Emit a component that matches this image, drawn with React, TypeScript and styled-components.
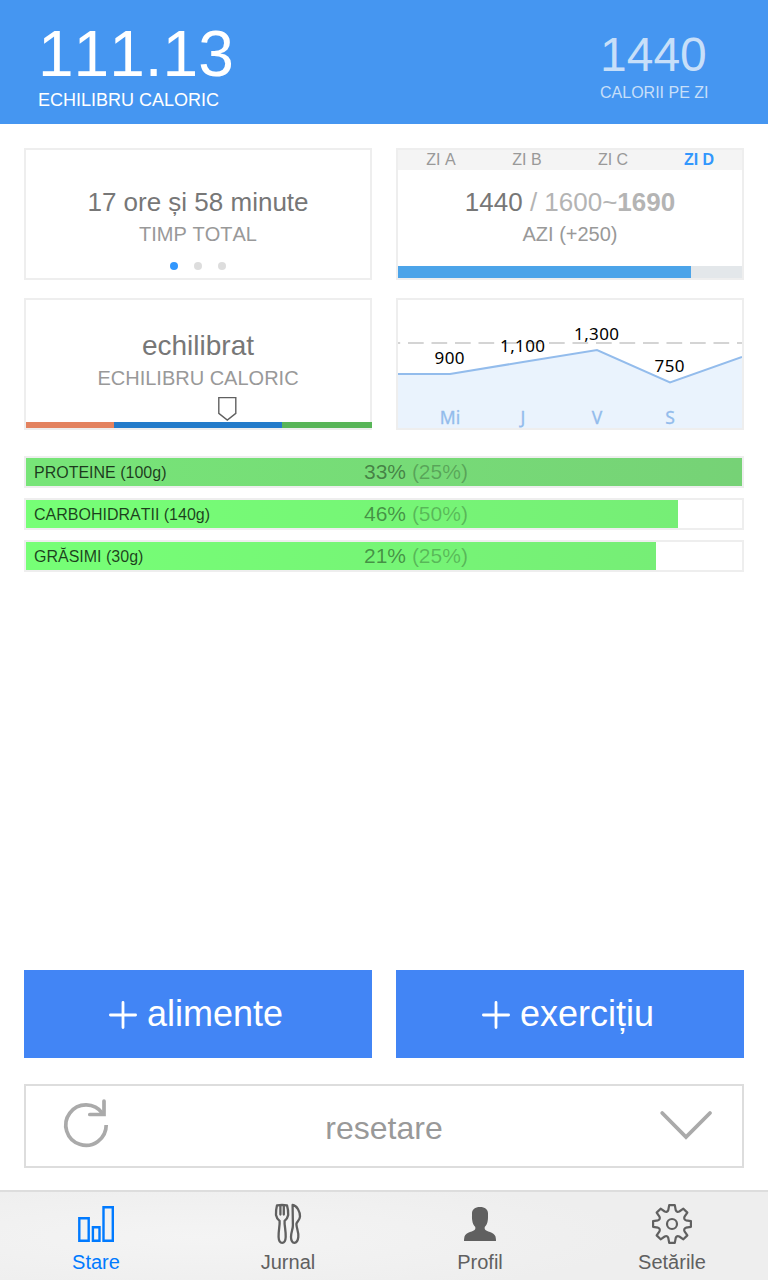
import React from "react";
import styled, { createGlobalStyle } from "styled-components";

const GlobalStyle = createGlobalStyle`
  * { box-sizing: border-box; }
  body {
    margin: 0;
    background: #fff;
    font-family: "Liberation Sans", Arial, sans-serif;
    font-kerning: none;
  }
`;

const Screen = styled.div`
  display: flex;
  flex-direction: column;
  width: 768px;
  height: 1280px;
  overflow: hidden;
  background: #fff;
`;

const Header = styled.header`
  display: flex;
  justify-content: space-between;
  flex: none;
  height: 124px;
  padding: 22px 59.5px 0 38px;
  background: #4596f1;
  color: #fff;
`;

const Stat = styled.div<{ $minor?: boolean }>`
  padding-top: ${(p) => (p.$minor ? 9 : 0)}px;
  color: ${(p) => (p.$minor ? "#c7dff9" : "#fff")};
  white-space: nowrap;
`;

const StatValue = styled.div<{ $size: number }>`
  font-size: ${(p) => p.$size}px;
  line-height: ${(p) => p.$size}px;
`;

const StatLabel = styled.div<{ $size: number }>`
  margin-top: 4px;
  font-size: ${(p) => p.$size}px;
  line-height: 20px;
`;

const Content = styled.main`
  display: flex;
  flex: 1;
  flex-direction: column;
  padding: 24px 24px 22px;
`;

const CardGrid = styled.section`
  display: grid;
  grid-template-columns: 348px 348px;
  gap: 18px 24px;
`;

const Card = styled.div`
  display: flex;
  flex-direction: column;
  align-items: center;
  height: 132px;
  border: 2px solid #eee;
  background: #fff;
`;

const CardValue = styled.div<{ $size?: number; $top: number }>`
  margin-top: ${(p) => p.$top}px;
  color: #777;
  font-size: ${(p) => p.$size ?? 26}px;
  line-height: 30px;
`;

const Muted = styled.span`
  color: #b4b4b4;
`;

const CardLabel = styled.div`
  margin-top: 5px;
  color: #999;
  font-size: 20px;
  line-height: 24px;
`;

const Dots = styled.div`
  display: flex;
  gap: 16px;
  margin-top: 16px;
`;

const Dot = styled.i<{ $on?: boolean }>`
  width: 8px;
  height: 8px;
  border-radius: 50%;
  background: ${(p) => (p.$on ? "#3297fd" : "#ddd")};
`;

const DayTabs = styled.div`
  display: grid;
  grid-template-columns: repeat(4, 1fr);
  width: 100%;
  height: 20px;
  background: #f4f4f4;
`;

const DayTab = styled.span<{ $on?: boolean }>`
  color: ${(p) => (p.$on ? "#3297fd" : "#999")};
  font-size: 16px;
  font-weight: ${(p) => (p.$on ? 700 : 400)};
  line-height: 19px;
  text-align: center;
`;

const Progress = styled.div`
  width: 100%;
  height: 12px;
  margin-top: auto;
  background: #e3e7ea;
`;

const ProgressFill = styled.div`
  height: 100%;
  background: #4ca4e9;
`;

const PointerRow = styled.div`
  width: 100%;
  height: 26px;
  margin-top: 6px;
  padding-left: 191px;
  svg { display: block; }
`;

const Scale = styled.div`
  display: flex;
  align-self: flex-start;
  width: 346px;
  height: 6px;
`;

const ScalePart = styled.span<{ $color: string; $width: number }>`
  width: ${(p) => p.$width}px;
  background: ${(p) => p.$color};
`;

const ChartSvg = styled.svg`
  display: block;
  font-family: "Noto Sans", "Open Sans", sans-serif;
`;

const Macros = styled.section`
  display: flex;
  flex-direction: column;
  gap: 10px;
  margin-top: 26px;
`;

const MacroRow = styled.div`
  display: grid;
  height: 32px;
  border: 2px solid #eee;
  > * { grid-area: 1 / 1; }
`;

const MacroFill = styled.div<{ $from: string; $to: string }>`
  background: linear-gradient(90deg, ${(p) => p.$from}, ${(p) => p.$to});
`;

const MacroText = styled.div`
  display: grid;
  grid-template-columns: 330px 1fr;
  height: 28px;
  padding-left: 8px;
  line-height: 28px;
`;

const MacroName = styled.span`
  color: rgba(0, 0, 0, 0.75);
  font-size: 16px;
  line-height: 30px;
`;

const MacroShare = styled.span`
  color: rgba(0, 0, 0, 0.42);
  font-size: 21px;
`;

const MacroGoal = styled.span`
  color: rgba(0, 0, 0, 0.25);
`;

const Actions = styled.section`
  display: grid;
  grid-template-columns: 348px 348px;
  gap: 24px;
  margin-top: auto;
`;

const ActionButton = styled.button`
  display: flex;
  align-items: center;
  justify-content: center;
  gap: 10px;
  height: 88px;
  padding: 0 4px 0 0;
  border: 0;
  background: #4285f5;
  color: #fff;
  font: 36px/40px "Liberation Sans", Arial, sans-serif;
  font-kerning: none;
`;

const PlusIcon = styled.svg`
  margin-top: 2px;
`;

const ResetButton = styled.button`
  display: grid;
  grid-template-columns: 120px 1fr 120px;
  align-items: center;
  height: 84px;
  margin-top: 26px;
  padding: 0;
  border: 2px solid #ddd;
  background: #fff;
  color: #999;
  font: 32px/36px "Liberation Sans", Arial, sans-serif;
  font-kerning: none;
  svg { display: block; }
`;

const ResetLabel = styled.span`
  padding-top: 4px;
`;

const TabBar = styled.nav`
  display: grid;
  grid-template-columns: repeat(4, 1fr);
  flex: none;
  height: 90px;
  border-top: 2px solid #ddd;
  background: radial-gradient(ellipse 440px 60px at 200px 45px, #f4f4f4, #eee);
`;

const Tab = styled.a<{ $on?: boolean }>`
  display: flex;
  flex-direction: column;
  align-items: center;
  padding-top: 10px;
  color: ${(p) => (p.$on ? "#007aff" : "#606060")};
  font-size: 20px;
  line-height: 24px;
  svg { margin-bottom: 4px; }
`;

const chartPoints = [
  { x: 52, y: 74, value: "900", day: "Mi" },
  { x: 125, y: 62, value: "1,100", day: "J" },
  { x: 199, y: 50, value: "1,300", day: "V" },
  { x: 272, y: 82.5, value: "750", day: "S" },
];

function WeekChart() {
  const line = `0,74 ${chartPoints.map((p) => `${p.x},${p.y}`).join(" ")} 344,57`;
  return (
    <ChartSvg width="344" height="128" viewBox="0 0 344 128">
      <polygon points={`${line} 344,128 0,128`} fill="#eaf3fd" />
      <path d="M-13.5 43H344" stroke="#d4d4d4" strokeWidth="2" strokeDasharray="15.7 7.8" />
      <polyline points={line} fill="none" stroke="#93bcec" strokeWidth="2" />
      {chartPoints.map((p) => (
        <g key={p.day} textAnchor="middle">
          <text x={p.x - 0.3} y={p.y - (p.y > 80 ? 10.5 : 10)} fontSize="17" letterSpacing="0.35" fill="#000">
            {p.value}
          </text>
          <text x={p.x} y="124" fontSize="17.5" fill="#93bcec" stroke="#93bcec" strokeWidth="0.3">
            {p.day}
          </text>
        </g>
      ))}
    </ChartSvg>
  );
}

const macros = [
  { name: "PROTEINE (100g)", share: "33%", goal: "(25%)", fill: 100, from: "#77e578", to: "#76d276" },
  { name: "CARBOHIDRATII (140g)", share: "46%", goal: "(50%)", fill: 91.06, from: "#76ff76", to: "#76ee76" },
  { name: "GRĂSIMI (30g)", share: "21%", goal: "(25%)", fill: 88, from: "#76ff76", to: "#76ee76" },
];

const Plus = () => (
  <PlusIcon width="28" height="28" viewBox="0 0 28 28" fill="none" stroke="#fff" strokeWidth="2.8" strokeLinecap="round">
    <path d="M14 1.4V26.6M1.4 14H26.6" />
  </PlusIcon>
);

const ReloadIcon = () => (
  <svg width="120" height="80" viewBox="26 1086 120 80" fill="none" stroke="#aaa" strokeWidth="3.7">
    <path d="M106.2 1125A20.2 20.2 0 1 1 102.5 1113.4" />
    <path d="M104 1101V1114.5H89.8" strokeLinecap="round" />
  </svg>
);

const ChevronIcon = () => (
  <svg width="120" height="80" viewBox="622 1086 120 80" fill="none" stroke="#aaa" strokeWidth="3.8" strokeLinecap="round">
    <path d="M662.2 1113L686 1137L710 1113" />
  </svg>
);

const BarsIcon = () => (
  <svg width="40" height="44" viewBox="76 1202 40 44" fill="none" stroke="currentColor" strokeWidth="2.4">
    <path d="M79.3 1218.3H88.7V1240.7H79.3ZM92.9 1227.3H99.5V1240.7H92.9ZM103.5 1207.3H112.8V1240.7H103.5Z" />
  </svg>
);

const CutleryIcon = () => (
  <svg width="40" height="44" viewBox="268 1202 40 44" fill="none" stroke="currentColor" strokeWidth="2.3" strokeLinejoin="round" strokeLinecap="round">
    <path d="M277 1205.3Q282 1204.7 287 1205.3Q288.4 1210 288.2 1215Q287.6 1218.4 284.6 1220.8C284.2 1225 285.9 1230 285.7 1237C285.4 1244.8 278.9 1244.8 278.6 1237C278.4 1230 280 1225 279.6 1220.8Q276.6 1218.4 276 1215Q275.8 1210 277 1205.3Z" />
    <path d="M280.4 1205.5V1214.6M283.8 1205.5V1214.6" />
    <path d="M292.6 1205C297 1205.5 300.2 1212 300 1216.5C299.8 1220.5 296.8 1221.5 296.4 1224C296.4 1228 298.9 1232 298.3 1237C297.5 1244.5 291 1245 291 1237C291 1232 293.1 1229 292.9 1225Z" />
  </svg>
);

const PersonIcon = () => (
  <svg width="40" height="44" viewBox="460 1202 40 44" fill="currentColor">
    <path d="M480 1207C475 1207 472 1209.5 472 1213.5C472 1216 471.9 1218 472.1 1219.5C472.5 1223.5 473.8 1225.5 475.3 1227V1229C474 1232 466 1231.6 464.5 1236.6Q464 1239 464 1241H496Q496 1239 495.5 1236.6C494 1231.6 486 1232 484.7 1229V1227C486.2 1225.5 487.5 1223.5 487.9 1219.5C488.1 1218 488 1216 488 1213.5C488 1209.5 485 1207 480 1207Z" />
  </svg>
);

// One tooth pointing up from the centre, then the rounded valley after it.
const tooth: [number, number][] = [
  [-3.7, -14],
  [-2.8, -18.9],
  [2.8, -18.9],
  [3.7, -14],
  [4.8, -11.4],
];

const gearOutline = Array.from({ length: 8 })
  .map((_, i) => {
    const turn = ([x, y]: [number, number], step: number) => {
      const a = (step * Math.PI) / 4;
      return `${(x * Math.cos(a) - y * Math.sin(a)).toFixed(2)} ${(x * Math.sin(a) + y * Math.cos(a)).toFixed(2)}`;
    };
    const [a, b, c, d, valley] = tooth.map((p) => turn(p, i));
    return `${i === 0 ? "M" : "L"}${a}L${b}L${c}L${d}Q${valley} ${turn(tooth[0], i + 1)}`;
  })
  .join("");

const GearIcon = () => (
  <svg width="44" height="44" viewBox="-22 -22 44 44" fill="none" stroke="currentColor" strokeWidth="2.2" strokeLinejoin="round">
    <path d={`${gearOutline}Z`} />
    <circle r="5" />
  </svg>
);

export default function App() {
  return (
    <>
      <GlobalStyle />
      <Screen>
        <Header>
          <Stat>
            <StatValue $size={64}>111.13</StatValue>
            <StatLabel $size={18}>ECHILIBRU CALORIC</StatLabel>
          </Stat>
          <Stat $minor>
            <StatValue $size={48}>1440</StatValue>
            <StatLabel $size={16}>CALORII PE ZI</StatLabel>
          </Stat>
        </Header>
        <Content>
          <CardGrid>
            <Card>
              <CardValue $top={37}>17 ore și 58 minute</CardValue>
              <CardLabel>TIMP TOTAL</CardLabel>
              <Dots>
                <Dot $on />
                <Dot />
                <Dot />
              </Dots>
            </Card>
            <Card>
              <DayTabs>
                <DayTab>ZI A</DayTab>
                <DayTab>ZI B</DayTab>
                <DayTab>ZI C</DayTab>
                <DayTab $on>ZI D</DayTab>
              </DayTabs>
              <CardValue $top={17}>
                1440 <Muted>/ 1600~<b>1690</b></Muted>
              </CardValue>
              <CardLabel>AZI (+250)</CardLabel>
              <Progress>
                <ProgressFill style={{ width: `${(1440 / 1690) * 100}%` }} />
              </Progress>
            </Card>
            <Card>
              <CardValue $top={31} $size={28}>echilibrat</CardValue>
              <CardLabel>ECHILIBRU CALORIC</CardLabel>
              <PointerRow>
                <svg width="20" height="25" viewBox="0 0 20 25" fill="#fff" stroke="#606060" strokeWidth="1.4">
                  <path d="M1.8 1.6H18.8V17.4L10.3 24L1.8 17.4Z" />
                </svg>
              </PointerRow>
              <Scale>
                <ScalePart $color="#e3825f" $width={88} />
                <ScalePart $color="#237bca" $width={168} />
                <ScalePart $color="#58b558" $width={90} />
              </Scale>
            </Card>
            <Card>
              <WeekChart />
            </Card>
          </CardGrid>
          <Macros>
            {macros.map((m) => (
              <MacroRow key={m.name}>
                <MacroFill $from={m.from} $to={m.to} style={{ width: `${m.fill}%` }} />
                <MacroText>
                  <MacroName>{m.name}</MacroName>
                  <MacroShare>
                    {m.share} <MacroGoal>{m.goal}</MacroGoal>
                  </MacroShare>
                </MacroText>
              </MacroRow>
            ))}
          </Macros>
          <Actions>
            <ActionButton>
              <Plus />
              alimente
            </ActionButton>
            <ActionButton>
              <Plus />
              exercițiu
            </ActionButton>
          </Actions>
          <ResetButton>
            <ReloadIcon />
            <ResetLabel>resetare</ResetLabel>
            <ChevronIcon />
          </ResetButton>
        </Content>
        <TabBar>
          <Tab $on>
            <BarsIcon />
            Stare
          </Tab>
          <Tab>
            <CutleryIcon />
            Jurnal
          </Tab>
          <Tab>
            <PersonIcon />
            Profil
          </Tab>
          <Tab>
            <GearIcon />
            Setările
          </Tab>
        </TabBar>
      </Screen>
    </>
  );
}
